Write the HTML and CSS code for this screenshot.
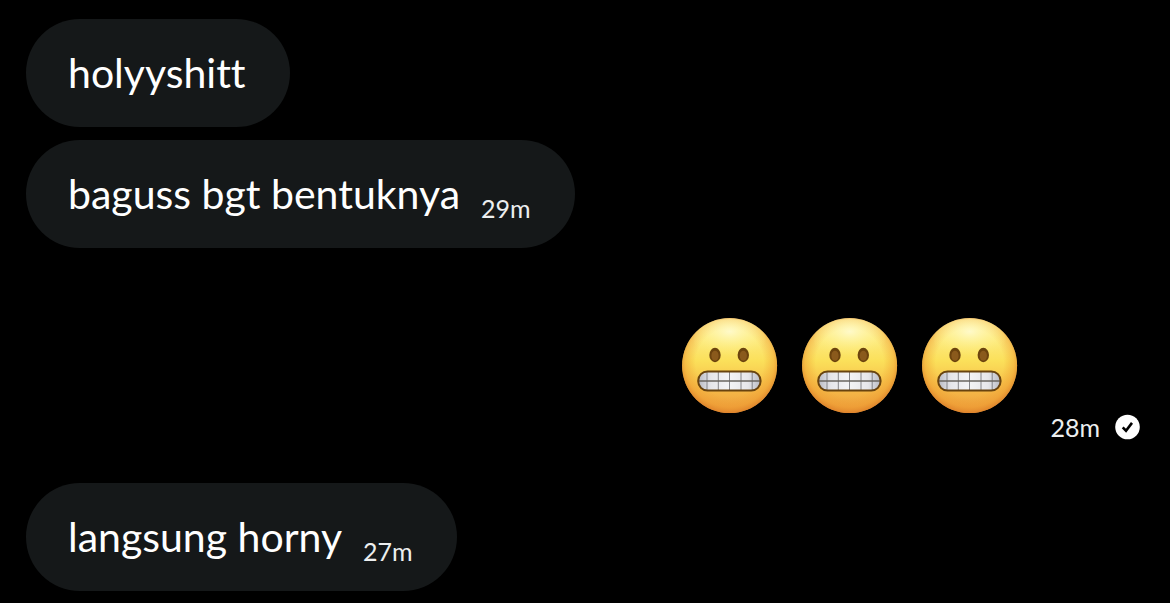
FILE: index.html
```html
<!DOCTYPE html>
<html lang="id">
<head>
<meta charset="utf-8">
<meta name="viewport" content="width=device-width, initial-scale=1">
<title>Messages</title>
<link rel="stylesheet" href="styles.css">
</head>
<body>
<svg class="defs" aria-hidden="true">
  <defs>
    <linearGradient id="skin" x1="0" y1="0" x2="0" y2="1">
      <stop offset="0" stop-color="#fff3b0"/>
      <stop offset=".2" stop-color="#fdeb83"/>
      <stop offset=".45" stop-color="#fbe05a"/>
      <stop offset=".7" stop-color="#f7c04a"/>
      <stop offset="1" stop-color="#ec9a3c"/>
    </linearGradient>
    <radialGradient id="rim" cx=".5" cy=".47" r=".54">
      <stop offset=".66" stop-color="#ee9a2e" stop-opacity="0"/>
      <stop offset=".86" stop-color="#ee9a2e" stop-opacity=".45"/>
      <stop offset="1" stop-color="#d97a28" stop-opacity=".9"/>
    </radialGradient>
    <radialGradient id="shine" cx=".5" cy=".3" r=".6">
      <stop offset="0" stop-color="#fffbd0" stop-opacity=".9"/>
      <stop offset="1" stop-color="#fff27a" stop-opacity="0"/>
    </radialGradient>
    <linearGradient id="teeth" x1="0" y1="0" x2="1" y2="0">
      <stop offset="0" stop-color="#b9bbc4"/>
      <stop offset=".2" stop-color="#e6e6ea"/>
      <stop offset=".5" stop-color="#f4f4f6"/>
      <stop offset=".8" stop-color="#e6e6ea"/>
      <stop offset="1" stop-color="#b9bbc4"/>
    </linearGradient>
    <symbol id="grimace" viewBox="0 0 96 96">
      <circle cx="47.6" cy="47.6" r="47.5" fill="url(#skin)"/>
      <circle cx="47.6" cy="47.6" r="47.5" fill="url(#rim)"/>
      <ellipse cx="47.6" cy="22" rx="36" ry="21" fill="url(#shine)"/>
      <ellipse cx="33" cy="37" rx="5.7" ry="7.2" fill="#6b430e"/>
      <ellipse cx="33" cy="37.7" rx="3.6" ry="5" fill="#8a5a1c"/>
      <ellipse cx="61.3" cy="37" rx="5.7" ry="7.2" fill="#6b430e"/>
      <ellipse cx="61.3" cy="37.7" rx="3.6" ry="5" fill="#8a5a1c"/>
      <rect x="16.5" y="53.5" width="62" height="19" rx="9" fill="url(#teeth)"/>
      <path d="M25 53.5v19M36.3 53.5v19M47.5 53.5v19M59 53.5v19M70.2 53.5v19" stroke="#858589" stroke-width="1"/>
      <path d="M16.5 63h62" stroke="#68645f" stroke-width="1.3"/>
      <rect x="16.2" y="53.4" width="62.4" height="19.2" rx="9.3" fill="none" stroke="#68430f" stroke-width="2"/>
    </symbol>
  </defs>
</svg>
<main class="chat">
  <ol class="thread">
    <li class="message received">
      <p class="bubble"><span class="text">holyyshitt</span></p>
    </li>
    <li class="message received">
      <p class="bubble"><span class="text">baguss bgt bentuknya</span><time class="time">29m</time></p>
    </li>
    <li class="message sent">
      <div class="emojis" role="img" aria-label="Three grimacing faces">
        <svg class="emoji"><use href="#grimace"/></svg>
        <svg class="emoji"><use href="#grimace"/></svg>
        <svg class="emoji"><use href="#grimace"/></svg>
      </div>
      <div class="status">
        <time class="time">28m</time>
        <svg class="check" viewBox="0 0 26 26" role="img" aria-label="Sent">
          <circle cx="13.5" cy="13" r="12.3" fill="#fff"/>
          <path d="M8.7 13.4l3.3 3.3 6-7.8" fill="none" stroke="#000" stroke-width="2.6"/>
        </svg>
      </div>
    </li>
    <li class="message received">
      <p class="bubble"><span class="text">langsung horny</span><time class="time">27m</time></p>
    </li>
  </ol>
</main>
</body>
</html>
```
FILE: styles.css
```css
* {
  box-sizing: border-box;
}

body {
  margin: 0;
  background: #000;
  color: #fff;
  font-family: Lato, "Liberation Sans", sans-serif;
  font-variant-ligatures: none;
}

.defs {
  position: absolute;
  width: 0;
  height: 0;
}

.chat {
  padding: 19px 30px 12px 26px;
}

.thread {
  display: flex;
  flex-direction: column;
  gap: 13px;
  margin: 0;
  padding: 0;
  list-style: none;
}

.message {
  display: flex;
}

.bubble {
  display: flex;
  align-items: flex-end;
  gap: 21px;
  margin: 0;
  padding: 29px 44px 29px 42px;
  border-radius: 54px;
  background: #151819;
}

.text {
  font-size: 41px;
  line-height: 50px;
}

.time {
  color: #eceeef;
  font-size: 25px;
  line-height: 30px;
}

.bubble .time {
  margin-bottom: -4px;
}

.sent {
  justify-content: flex-end;
  align-items: flex-end;
  gap: 32px;
  padding: 57px 0 28px;
}

.emojis {
  display: flex;
  gap: 24px;
  padding-bottom: 28px;
}

.emoji {
  width: 96px;
  height: 96px;
}

.status {
  display: flex;
  align-items: center;
  gap: 14px;
}

.check {
  width: 26px;
  height: 26px;
}
```
